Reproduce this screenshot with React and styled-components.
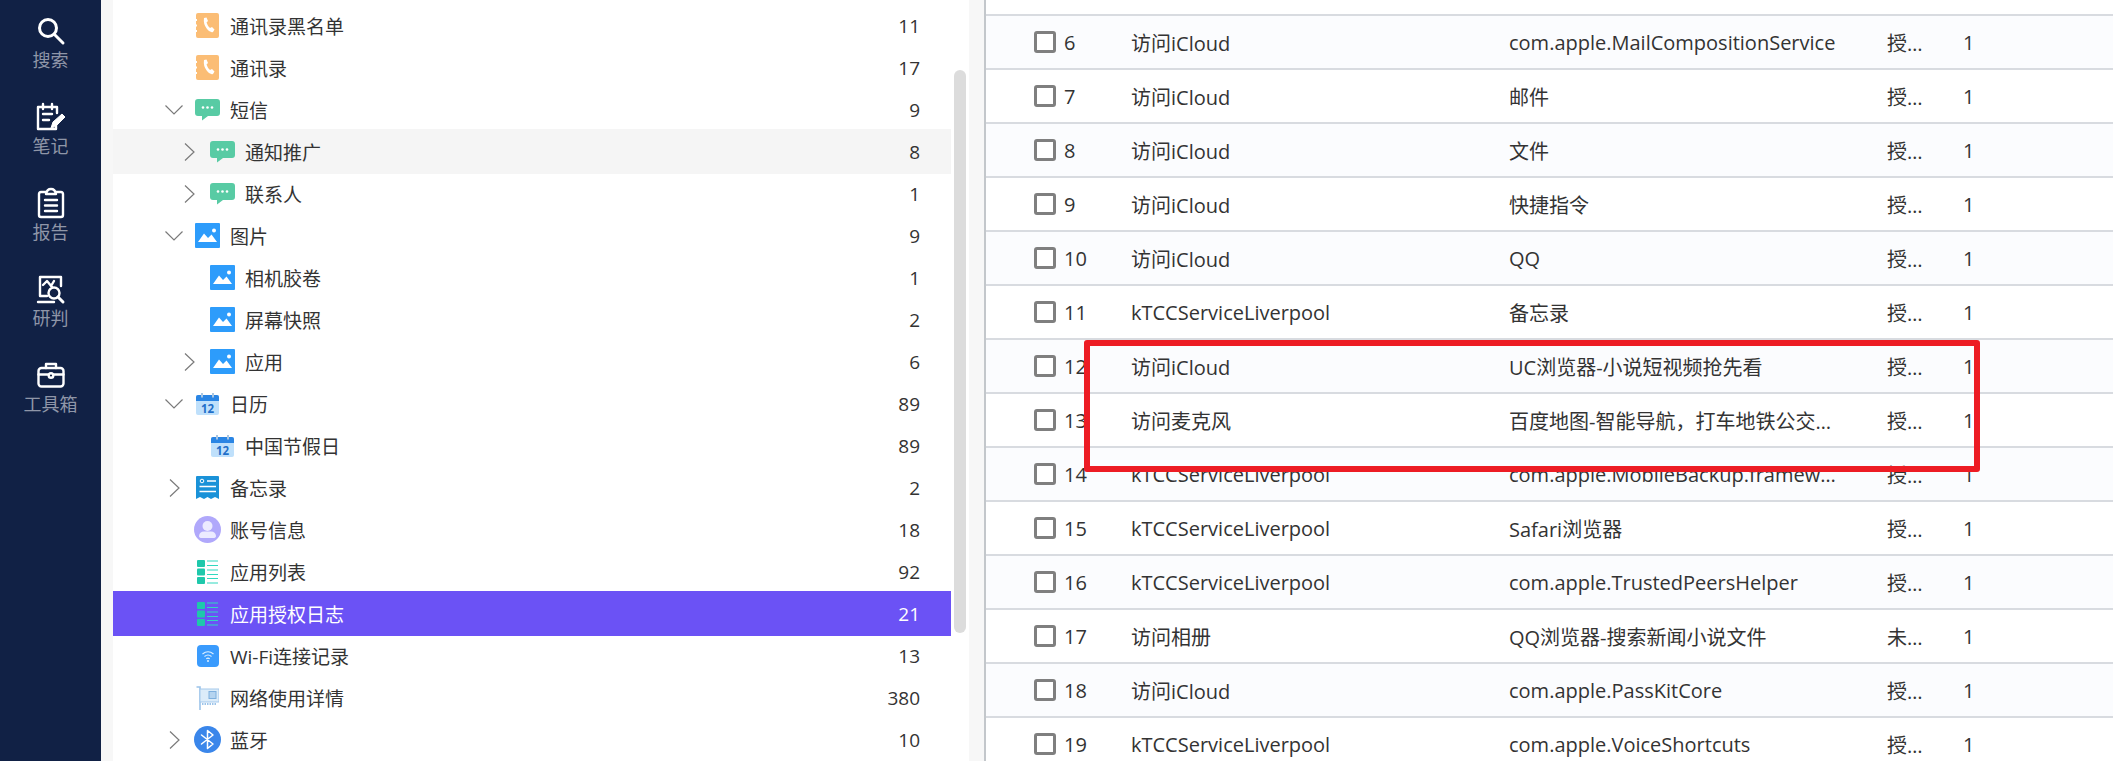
import React from "react";
import styled, { createGlobalStyle } from "styled-components";

const Global = createGlobalStyle`
  html, body { margin: 0; padding: 0; background: #fff; }
  body { font-family: "Open Sans", "Noto Sans CJK SC", sans-serif; color: #333; }
`;

const Page = styled.div`
  display: flex;
  width: 2113px;
  height: 761px;
  overflow: hidden;
  background: #fff;
`;

const Rail = styled.nav`
  flex: 0 0 101px;
  background: #112145;
`;
const RailItem = styled.div`
  height: 86px;
  box-sizing: border-box;
  padding-top: 16px;
  display: flex;
  flex-direction: column;
  align-items: center;
  gap: 2px;
`;
const RailIcon = styled.span`
  display: flex;
  align-items: center;
  justify-content: center;
  width: 32px;
  height: 30px;
  & svg { display: block; overflow: visible; }
`;
const RailLabel = styled.span`
  font-size: 18px;
  line-height: 24px;
  color: #8f96a8;
  white-space: nowrap;
  margin-left: 0;
`;

const Gutter = styled.div`
  flex: 0 0 ${(p) => p.$w}px;
  background: #f7f7f7;
`;

const TreePanel = styled.section`
  position: relative;
  flex: 0 0 856px;
  box-sizing: border-box;
  padding-top: 3px;
  overflow: hidden;
  background: #fff;
`;
const TreeRow = styled.div`
  display: flex;
  align-items: center;
  width: 838px;
  height: 45px;
  margin-bottom: -3px;
  box-sizing: border-box;
  padding-left: ${(p) => 51 + p.$level * 15}px;
  padding-right: 31px;
  background: ${(p) => (p.$selected ? "#6b52f5" : p.$hover ? "#f5f5f5" : "transparent")};
  color: ${(p) => (p.$selected ? "#fff" : "#333")};
  font-size: 19px;
`;
const Caret = styled.span`
  flex: 0 0 20px;
  display: flex;
  justify-content: center;
  align-items: center;
  margin-right: 9px;
`;
const TreeIcon = styled.span`
  flex: 0 0 29px;
  display: flex;
  justify-content: center;
  align-items: center;
  margin-right: 8px;
`;
const TreeName = styled.span`
  flex: 1;
  white-space: nowrap;
`;
const TreeCount = styled.span`
  text-align: right;
`;
const Thumb = styled.div`
  position: absolute;
  left: 841px;
  top: 70px;
  width: 12px;
  height: 563px;
  border-radius: 6px;
  background: #dcdcdc;
`;

const TablePane = styled.section`
  position: relative;
  flex: 1;
  min-width: 0;
  border-left: 2px solid #c3c7cb;
  background: #fff;
`;
const TopStub = styled.div`
  height: 14px;
  border-bottom: 2px solid #d8dbe0;
`;
const Row = styled.div`
  display: grid;
  grid-template-columns: 145px 378px 378px 76px 1fr;
  align-items: center;
  height: 52px;
  border-bottom: 2px solid #d8dbe0;
  background: ${(p) => (p.$tint ? "#fbfcfe" : "#fff")};
  font-size: 20px;
  color: #333;
`;
const IndexCell = styled.div`
  display: flex;
  align-items: center;
  gap: 8px;
  padding-left: 48px;
`;
const Check = styled.span`
  width: 22px;
  height: 22px;
  box-sizing: border-box;
  border: 3px solid #7f7f7f;
  border-radius: 3px;
  background: #fff;
`;
const Cell = styled.div`
  min-width: 0;
  width: ${(p) => p.$w || "auto"};
  white-space: nowrap;
  overflow: hidden;
  text-overflow: ellipsis;
`;
const RedBox = styled.div`
  position: absolute;
  left: 98px;
  top: 340px;
  width: 896px;
  height: 132px;
  box-sizing: border-box;
  border: 6px solid #ed1c24;
  border-radius: 3px;
`;

const S = { fill: "none", stroke: "#fff", strokeWidth: 2.4, strokeLinecap: "round", strokeLinejoin: "round" };

const SearchGlyph = () => (
  <svg width="28" height="28" viewBox="0 0 28 28" {...S} strokeWidth="3">
    <circle cx="11" cy="11" r="8.5" />
    <path d="M18 18 L26 26" />
  </svg>
);
const NoteGlyph = () => (
  <svg width="30" height="28" viewBox="0 0 30 28" {...S}>
    <path d="M20 20 V26 H2 V4 H21 V10" />
    <path d="M7 1 V6 M16 1 V6 M7 11 H16 M7 17 H13" />
    <path d="M15 25 L17 19 L26 11 L29 14 L20 23 Z" fill="#fff" stroke="#fff" strokeWidth="1" />
  </svg>
);
const ReportGlyph = () => (
  <svg width="26" height="30" viewBox="0 0 26 30" {...S}>
    <path d="M8 4 H3 Q1 4 1 6 V27 Q1 29 3 29 H23 Q25 29 25 27 V6 Q25 4 23 4 H18" />
    <path d="M8 6 Q9 1 13 1 Q17 1 18 6 Z" />
    <path d="M7 12 H19 M7 17.500 H19 M7 23 H19" />
  </svg>
);
const JudgeGlyph = () => (
  <svg width="27" height="28" viewBox="0 0 27 28" {...S}>
    <path d="M24 11 V2 H3 V21 H10" />
    <path d="M1 27 H17" />
    <path d="M6 10 L10 6 L15 12 M17 6 L14 11" />
    <circle cx="17" cy="18" r="5.500" />
    <path d="M21 22 L26 27" strokeWidth="3" />
  </svg>
);
const CaseGlyph = () => (
  <svg width="28" height="26" viewBox="0 0 28 26" {...S}>
    <rect x="1.500" y="6" width="25" height="18.500" rx="3" />
    <path d="M9 6 V2 H19 V6" />
    <path d="M1.500 12.500 H11 M17 12.500 H26.500" />
    <circle cx="14" cy="13.500" r="2.300" />
  </svg>
);

const CaretGlyph = ({ open }) =>
  open ? (
    <svg width="18" height="10" viewBox="0 0 18 10" fill="none" stroke="#7a7a7a" strokeWidth="1.200">
      <path d="M0.500 0.500 L9 9 L17.500 0.500" />
    </svg>
  ) : (
    <svg width="11" height="18" viewBox="0 0 11 18" fill="none" stroke="#7a7a7a" strokeWidth="1.200">
      <path d="M1 0.500 L10 9 L1 17.500" />
    </svg>
  );

const PhoneIcon = () => (
  <svg width="23" height="25" viewBox="0 0 23 25">
    <path d="M2 0 H21 Q23 0 23 2 V23 Q23 25 21 25 H2 Q0 25 0 23 V19 H1 V17 H0 V13.500 H1 V11.500 H0 V8 H1 V6 H0 V2 Q0 0 2 0 Z" fill="#fbbd75" />
    <path d="M8 5 L10.500 4.500 L12 8 L10.500 9.500 Q11.500 13 14 15 L16 14 L18.500 16.500 L17 19 Q14 20 11 16 Q7 11 8 5 Z" fill="#fff" />
  </svg>
);
const ChatIcon = () => (
  <svg width="25" height="22" viewBox="0 0 25 22">
    <path d="M3 0 H22 Q25 0 25 3 V14 Q25 17 22 17 H13 L7 21.500 L7 17 H3 Q0 17 0 14 V3 Q0 0 3 0 Z" fill="#58cba4" />
    <circle cx="8" cy="8.500" r="1.300" fill="#fff" />
    <circle cx="12.500" cy="8.500" r="1.300" fill="#fff" />
    <circle cx="17" cy="8.500" r="1.300" fill="#fff" />
  </svg>
);
const ImageIcon = () => (
  <svg width="25" height="25" viewBox="0 0 25 25">
    <rect width="25" height="25" rx="1" fill="#2d9cfb" />
    <circle cx="19" cy="7.500" r="2" fill="#fff" />
    <path d="M3 19 L9 10.500 L13 15 L16.500 11.500 L22 19 Z" fill="#fff" />
  </svg>
);
const CalendarIcon = () => (
  <svg width="23" height="22" viewBox="0 0 23 22">
    <rect y="2" width="23" height="20" rx="2" fill="#bfe0fb" />
    <path d="M0 8 V4 Q0 2 2 2 H21 Q23 2 23 4 V8 Z" fill="#2a85e4" />
    <rect x="5" y="0" width="2" height="4.500" fill="#a9c6e2" />
    <rect x="16" y="0" width="2" height="4.500" fill="#a9c6e2" />
    <text x="11.500" y="19.500" textAnchor="middle" fontSize="11.500" fontWeight="700" fontFamily="Open Sans, sans-serif" fill="#1f6fc9">12</text>
  </svg>
);
const NotesIcon = () => (
  <svg width="23" height="23" viewBox="0 0 23 23">
    <path d="M1 0 H22 Q23 0 23 1 V23 L19 21 L15 23 L11.500 21 L8 23 L4 21 L0 23 V1 Q0 0 1 0 Z" fill="#1a92d8" />
    <circle cx="6" cy="5" r="1.800" fill="none" stroke="#fff" strokeWidth="1" />
    <path d="M11 5 H20 M3.500 10.500 H20 M3.500 15.500 H20" stroke="#fff" strokeWidth="1.400" />
  </svg>
);
const AccountIcon = () => (
  <svg width="27" height="27" viewBox="0 0 27 27">
    <circle cx="13.500" cy="13.500" r="13.500" fill="#b0a8fb" />
    <circle cx="13.500" cy="10" r="5" fill="#ecebff" />
    <path d="M5 20 Q5.500 15.500 10 15.500 H17 Q21.500 15.500 22 20 Q22 22 19 22 H8 Q5 22 5 20 Z" fill="#ecebff" />
  </svg>
);
const ListIcon = () => (
  <svg width="21" height="24" viewBox="0 0 21 24">
    <rect width="8" height="7" rx="1" y="0" fill="#1ec8ab" />
    <rect width="8" height="7" rx="1" y="8.500" fill="#1ec8ab" />
    <rect width="8" height="7" rx="1" y="17" fill="#1ec8ab" />
    <path d="M10 1 H21 M10 5.500 H21 M10 10 H21 M10 14.500 H21 M10 18.500 H21 M10 23 H21" stroke="#30d8bf" strokeWidth="1.200" />
  </svg>
);
const WifiIcon = () => (
  <svg width="22" height="22" viewBox="0 0 22 22" fill="none">
    <rect width="22" height="22" rx="4" fill="#3a9bfd" />
    <path d="M5.500 9 Q11 4.500 16.500 9 M7.500 11.500 Q11 8.500 14.500 11.500 M9.300 13.800 Q11 12.500 12.700 13.800" stroke="#dff0ff" strokeWidth="1.100" />
    <circle cx="11" cy="16" r="1" fill="#dff0ff" />
  </svg>
);
const NetIcon = () => (
  <svg width="23" height="24" viewBox="0 0 23 24" fill="none">
    <path d="M0.500 1 H4 V24" stroke="#9cc4ea" strokeWidth="1.600" />
    <rect x="4" y="3" width="19" height="13" fill="#dcecf9" stroke="#a5c9ec" strokeWidth="1" />
    <rect x="13" y="5.500" width="7" height="7" fill="#b5d4f0" stroke="#7fb0de" strokeWidth="1" />
    <path d="M6 18 H21" stroke="#9cc4ea" strokeWidth="2" strokeDasharray="1.500 1" />
  </svg>
);
const BluetoothIcon = () => (
  <svg width="27" height="27" viewBox="0 0 27 27" fill="none">
    <circle cx="13.500" cy="13.500" r="13.500" fill="#3a86ea" />
    <path d="M7.500 9 L19 18 L13.500 22.500 V4.500 L19 9 L7.500 18" stroke="#fff" strokeWidth="1.500" strokeLinejoin="round" strokeLinecap="round" />
  </svg>
);

const railItems = [
  [SearchGlyph, "搜索"],
  [NoteGlyph, "笔记"],
  [ReportGlyph, "报告"],
  [JudgeGlyph, "研判"],
  [CaseGlyph, "工具箱"],
];

const treeRows = [
  { level: 0, icon: PhoneIcon, name: "通讯录黑名单", count: 11 },
  { level: 0, icon: PhoneIcon, name: "通讯录", count: 17 },
  { level: 0, caret: "open", icon: ChatIcon, name: "短信", count: 9 },
  { level: 1, caret: "closed", icon: ChatIcon, name: "通知推广", count: 8, hover: true },
  { level: 1, caret: "closed", icon: ChatIcon, name: "联系人", count: 1 },
  { level: 0, caret: "open", icon: ImageIcon, name: "图片", count: 9 },
  { level: 1, icon: ImageIcon, name: "相机胶卷", count: 1 },
  { level: 1, icon: ImageIcon, name: "屏幕快照", count: 2 },
  { level: 1, caret: "closed", icon: ImageIcon, name: "应用", count: 6 },
  { level: 0, caret: "open", icon: CalendarIcon, name: "日历", count: 89 },
  { level: 1, icon: CalendarIcon, name: "中国节假日", count: 89 },
  { level: 0, caret: "closed", icon: NotesIcon, name: "备忘录", count: 2 },
  { level: 0, icon: AccountIcon, name: "账号信息", count: 18 },
  { level: 0, icon: ListIcon, name: "应用列表", count: 92 },
  { level: 0, icon: ListIcon, name: "应用授权日志", count: 21, selected: true },
  { level: 0, icon: WifiIcon, name: "Wi-Fi连接记录", count: 13 },
  { level: 0, icon: NetIcon, name: "网络使用详情", count: 380 },
  { level: 0, caret: "closed", icon: BluetoothIcon, name: "蓝牙", count: 10 },
];

const K = "kTCCServiceLiverpool";
const I = "访问iCloud";
const tableRows = [
  [6, I, "com.apple.MailCompositionService", "授权"],
  [7, I, "邮件", "授权"],
  [8, I, "文件", "授权"],
  [9, I, "快捷指令", "授权"],
  [10, I, "QQ", "授权"],
  [11, K, "备忘录", "授权"],
  [12, I, "UC浏览器-小说短视频抢先看", "授权"],
  [13, "访问麦克风", "百度地图-智能导航，打车地铁公交出行必备", "授权"],
  [14, K, "com.apple.MobileBackup.framework", "授权"],
  [15, K, "Safari浏览器", "授权"],
  [16, K, "com.apple.TrustedPeersHelper", "授权"],
  [17, "访问相册", "QQ浏览器-搜索新闻小说文件", "未授权"],
  [18, I, "com.apple.PassKitCore", "授权"],
  [19, K, "com.apple.VoiceShortcuts", "授权"],
];

export default function App() {
  return (
    <Page>
      <Global />
      <Rail>
        {railItems.map(([Icon, label]) => (
          <RailItem key={label}>
            <RailIcon>
              <Icon />
            </RailIcon>
            <RailLabel>{label}</RailLabel>
          </RailItem>
        ))}
      </Rail>
      <Gutter $w={12} />
      <TreePanel>
        {treeRows.map((r) => (
          <TreeRow key={r.name} $level={r.level} $hover={r.hover} $selected={r.selected}>
            <Caret>{r.caret && <CaretGlyph open={r.caret === "open"} />}</Caret>
            <TreeIcon>
              <r.icon />
            </TreeIcon>
            <TreeName>{r.name}</TreeName>
            <TreeCount>{r.count}</TreeCount>
          </TreeRow>
        ))}
        <Thumb />
      </TreePanel>
      <Gutter $w={15} />
      <TablePane>
        <TopStub />
        {tableRows.map(([n, a, b, c]) => (
          <Row key={n} $tint={n % 2 === 0}>
            <IndexCell>
              <Check />
              <span>{n}</span>
            </IndexCell>
            <Cell>{a}</Cell>
            <Cell $w="338px">{b}</Cell>
            <Cell $w="38px">{c}</Cell>
            <Cell>1</Cell>
          </Row>
        ))}
        <RedBox />
      </TablePane>
    </Page>
  );
}
